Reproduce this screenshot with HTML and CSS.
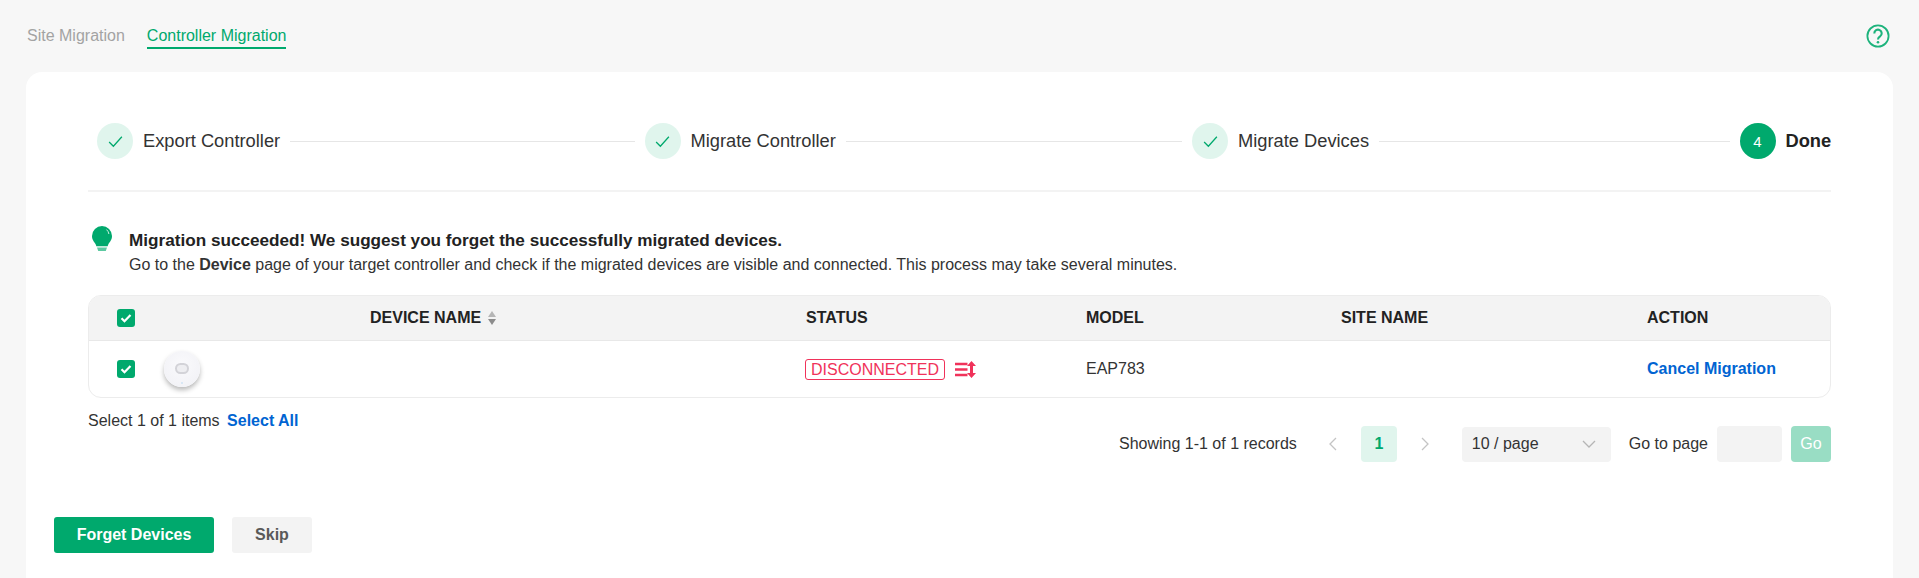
FILE: index.html
```html
<!DOCTYPE html>
<html lang="en">
<head>
<meta charset="utf-8">
<title>Controller Migration</title>
<link rel="stylesheet" href="styles.css">
</head>
<body>
<header class="topbar">
  <nav class="tabs">
    <a class="tab">Site Migration</a>
    <a class="tab tab-active">Controller Migration</a>
  </nav>
  <svg class="help" viewBox="0 0 24 24" aria-hidden="true"><circle cx="12" cy="12" r="10.6" fill="none" stroke="currentColor" stroke-width="1.8"/><path d="M8.300 9.400a3.700 3.700 0 1 1 5.800 3c-1.300.9-2.100 1.500-2.100 3" fill="none" stroke="currentColor" stroke-width="2.100"/><circle cx="12" cy="18.200" r="1.300" fill="currentColor"/></svg>
</header>
<main class="card">
  <ol class="steps">
    <li class="step"><span class="dot"><svg class="tick" viewBox="0 0 16 16"><path d="M2 8.500l4 4 8-9"/></svg></span><span class="step-label">Export Controller</span><span class="line"></span></li>
    <li class="step"><span class="dot"><svg class="tick" viewBox="0 0 16 16"><path d="M2 8.500l4 4 8-9"/></svg></span><span class="step-label">Migrate Controller</span><span class="line"></span></li>
    <li class="step"><span class="dot"><svg class="tick" viewBox="0 0 16 16"><path d="M2 8.500l4 4 8-9"/></svg></span><span class="step-label">Migrate Devices</span><span class="line"></span></li>
    <li class="step step-last"><span class="dot dot-current">4</span><span class="step-label step-label-current">Done</span></li>
  </ol>
  <section class="notice">
    <svg class="bulb" viewBox="0 0 20 25" aria-hidden="true"><path d="M10 0a10 10 0 0 1 10 10c0 4-2.400 6-3.500 8-.5.9-.7 1.600-.8 2.200H4.300c-.1-.6-.3-1.300-.8-2.200C2.400 16 0 14 0 10A10 10 0 0 1 10 0z" fill="#00a96d"/><path d="M5 21.500h10l-1.200 3.500H6.200z" fill="#5cc9a1"/><path d="M14.500 3.600a7 7 0 0 1 2.400 4.400" fill="none" stroke="#c8eee0" stroke-width="1"/></svg>
    <div class="notice-text">
      <p class="notice-title">Migration succeeded! We suggest you forget the successfully migrated devices.</p>
      <p class="notice-sub">Go to the <b>Device</b> page of your target controller and check if the migrated devices are visible and connected. This process may take several minutes.</p>
    </div>
  </section>
  <div class="table">
    <div class="row row-head">
      <span class="cell"><span class="check"><svg viewBox="0 0 18 18"><path d="M4.500 9.300l3 3 6-6.300"/></svg></span></span>
      <span class="cell cell-label cell-name">DEVICE NAME<svg class="sort" viewBox="0 0 8 14"><path d="M4 0l4 6H0z" fill="#b5b5b5"/><path d="M4 14L0 8h8z" fill="#8c8c8c"/></svg></span>
      <span class="cell cell-label">STATUS</span>
      <span class="cell cell-label">MODEL</span>
      <span class="cell cell-label">SITE NAME</span>
      <span class="cell cell-label">ACTION</span>
    </div>
    <div class="row row-body">
      <span class="cell"><span class="check"><svg viewBox="0 0 18 18"><path d="M4.500 9.300l3 3 6-6.300"/></svg></span></span>
      <span class="cell"><span class="ap"><span class="ap-logo"></span><span class="ap-led"></span></span></span>
      <span class="cell"><span class="badge">DISCONNECTED</span><svg class="swap" viewBox="0 0 21 17"><path d="M0 3h12.500M0 8.500h12.500M0 14h12.500" stroke="#f0325a" stroke-width="2.400" fill="none"/><path d="M16.500 0L21 5h-3v7h3l-4.500 5-4.500-5h3V5h-3z" fill="#f0325a"/></svg></span>
      <span class="cell">EAP783</span>
      <span class="cell"></span>
      <span class="cell"><a class="link">Cancel Migration</a></span>
    </div>
  </div>
  <div class="below">
    <p class="selected">Select 1 of 1 items <a class="link link-gap">Select All</a></p>
    <div class="pager">
      <span class="records">Showing 1-1 of 1 records</span>
      <svg class="chev chev-prev" viewBox="0 0 10 16"><path d="M8 2L2 8l6 6"/></svg>
      <span class="page">1</span>
      <svg class="chev chev-next" viewBox="0 0 10 16"><path d="M2 2l6 6-6 6"/></svg>
      <span class="select">10 / page<svg class="chev-down" viewBox="0 0 16 10"><path d="M2 2l6 6 6-6"/></svg></span>
      <span class="goto">Go to page</span>
      <span class="input"></span>
      <span class="go">Go</span>
    </div>
  </div>
  <div class="actions">
    <button class="btn btn-primary">Forget Devices</button>
    <button class="btn btn-plain">Skip</button>
  </div>
</main>
</body>
</html>
```
FILE: styles.css
```css
* { box-sizing: border-box; }
html, body { margin: 0; height: 100%; }
body {
  height: 578px;
  overflow: hidden;
  background: #f7f7f7;
  color: #333;
  font-family: "Liberation Sans", Arial, sans-serif;
  font-size: 16px;
}
p { margin: 0; }
ol { list-style: none; margin: 0; padding: 0; }

.topbar {
  height: 72px;
  padding: 24px 29px 0 27px;
  display: flex;
  justify-content: space-between;
  align-items: flex-start;
}
.tabs { display: flex; gap: 22px; }
.tab {
  height: 25px;
  line-height: 24px;
  color: #a3a3a3;
}
.tab-active { color: #00a96d; border-bottom: 2px solid #00a96d; }
.help { width: 24px; height: 24px; color: #1db37c; }

.card {
  margin: 0 26px;
  height: 506px;
  padding: 0 62px;
  background: #fff;
  border-radius: 16px 16px 0 0;
}
.steps {
  height: 120px;
  padding: 51px 0 0 9px;
  display: grid;
  grid-template-columns: 547.500px 547.500px 547.500px 1fr;
  align-items: start;
  border-bottom: 2px solid #f3f3f3;
}
.step { display: flex; align-items: center; height: 36px; padding-right: 10px; }
.step-last { padding-right: 0; }
.dot {
  width: 36px;
  height: 36px;
  border-radius: 50%;
  background: #e0f5ed;
  display: flex;
  align-items: center;
  justify-content: center;
  margin-right: 10px;
  flex: none;
}
.dot-current { background: #00a96d; color: #fff; font-size: 15px; }
.tick { width: 17px; height: 17px; fill: none; stroke: #00a96d; stroke-width: 1.200; }
.step-label { font-size: 18.300px; color: #333; white-space: nowrap; }
.step-label-current { font-weight: 700; color: #222; }
.line {
  flex: 1;
  height: 1px;
  margin-left: 10px;
  background: #e6e6e6;
}

.notice {
  display: flex;
  align-items: flex-start;
  gap: 17px;
  padding: 34px 0 0 4px;
  height: 103px;
}
.bulb { width: 20px; height: 25px; flex: none; }
.notice-text { margin-top: 2px; }
.notice-title { font-size: 17.150px; font-weight: 700; line-height: 24px; color: #222; }
.notice-sub { line-height: 25px; }

.table {
  border: 1px solid #ececec;
  border-radius: 13px;
  overflow: hidden;
}
.row {
  display: grid;
  grid-template-columns: 75px 642px 280px 255px 306px 1fr;
  align-items: center;
}
.row-head {
  height: 45px;
  background: #f3f3f3;
  border-bottom: 1px solid #e8e8e8;
  font-weight: 700;
  color: #222;
}
.row-body { height: 56px; }
.cell { display: flex; align-items: center; }
.cell-label { margin-top: -1px; }
.cell-name { padding-left: 206px; }
.check {
  width: 18px;
  height: 18px;
  margin-left: 28px;
  border-radius: 3px;
  background: #00a96d;
  display: block;
}
.check svg { display: block; width: 18px; height: 18px; fill: none; stroke: #fff; stroke-width: 2.200; }
.sort { width: 8px; height: 14px; margin-left: 7px; }
.ap {
  position: relative;
  width: 36px;
  height: 36px;
  border-radius: 50%;
  background: radial-gradient(circle at 50% 40%, #fafafc 0%, #f3f3f7 70%, #eceef3 100%);
  box-shadow: 0 3px 5px rgba(0,0,0,.28);
  display: flex;
  justify-content: center;
  padding-top: 12px;
}
.ap-logo { width: 14px; height: 11px; border: 2px solid #d3d3d8; border-radius: 6px; background: #eeeef1; }
.ap-led {
  position: absolute;
  left: 17px;
  bottom: 3px;
  width: 2px;
  height: 2px;
  border-radius: 50%;
  background: #cfe3f5;
}
.badge {
  height: 21px;
  width: 140px;
  margin-left: -1px;
  border: 1px solid #f0325a;
  border-radius: 3px;
  color: #f0325a;
  line-height: 19px;
  text-align: center;
}
.swap { width: 21px; height: 17px; margin-left: 10px; }
.link { color: #0064d2; font-weight: 700; }

.below { display: flex; justify-content: space-between; align-items: flex-start; }
.selected { margin-top: 13px; line-height: 20px; }
.link-gap { margin-left: 3px; }
.pager { display: flex; align-items: center; height: 36px; margin-top: 28px; }
.chev { width: 10px; height: 16px; fill: none; stroke: #c4c4c4; stroke-width: 1.300; }
.chev-prev { margin-left: 31px; }
.page {
  width: 36px;
  height: 36px;
  margin-left: 23px;
  border-radius: 4px;
  background: #e0f5ed;
  color: #00a96d;
  font-weight: 700;
  display: flex;
  align-items: center;
  justify-content: center;
}
.chev-next { margin-left: 23px; }
.select {
  width: 149px;
  height: 35px;
  margin-left: 32px;
  padding: 0 14px 0 10px;
  border-radius: 4px;
  background: #f3f3f3;
  display: flex;
  align-items: center;
  justify-content: space-between;
}
.chev-down { width: 16px; height: 10px; fill: none; stroke: #b5b5b5; stroke-width: 1.300; }
.goto { margin-left: 18px; }
.input { width: 65px; height: 36px; margin-left: 9px; background: #f3f3f3; border-radius: 4px; }
.go {
  width: 40px;
  height: 36px;
  margin-left: 9px;
  border-radius: 4px;
  background: #99ddc4;
  color: #fff;
  display: flex;
  align-items: center;
  justify-content: center;
}

.actions { display: flex; gap: 18px; margin: 55px 0 0 -34px; }
.btn {
  height: 36px;
  border: 0;
  border-radius: 3px;
  font-family: inherit;
  font-size: 16px;
  font-weight: 700;
  padding: 0;
}
.btn-primary { width: 160px; background: #00a96d; color: #fff; }
.btn-plain { width: 80px; background: #f3f3f3; color: #595959; }
```
